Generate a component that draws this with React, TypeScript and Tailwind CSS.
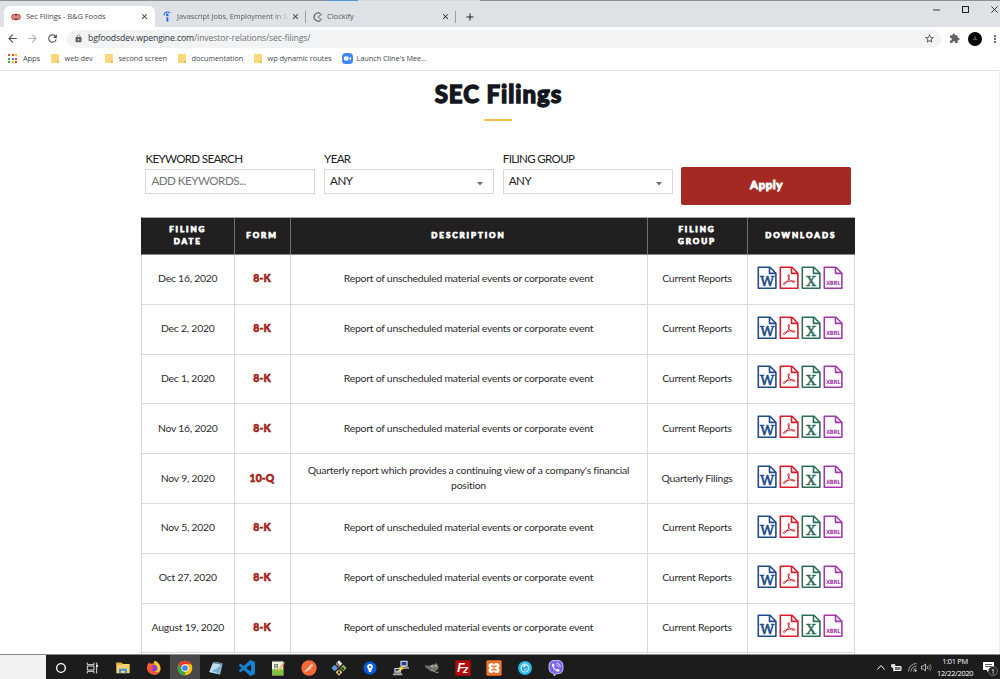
import type { ReactNode } from "react";
import { MdArrowBack, MdArrowForward, MdClose, MdExtension, MdLock, MdMoreVert, MdRefresh, MdStarBorder, MdAdd } from "react-icons/md";

const ui = "font-['Open_Sans','Noto_Sans',sans-serif]";

function TabSep() {
  return <div className="h-[12px] w-px shrink-0 bg-[#9a9da1]" />;
}

function TabStrip() {
  return (
    <div className="relative flex h-[27px] items-end border-t border-[#8c8f94] bg-[#dee1e6]">
      <div className="absolute -top-px left-[328px] h-px w-[30px] bg-[#4a9be0]" />
      <div className="absolute -top-px left-[358px] h-px w-[122px] bg-[#d5d8dc]" />
      <div className="ml-[4px] flex h-[21px] w-[151px] items-center rounded-t-[6px] bg-white pl-[7px]">
        <svg viewBox="0 0 20 14" className="h-[8px] w-[10px]">
          <ellipse cx="10" cy="7" rx="9.5" ry="6.5" fill="#b33a35" />
          <ellipse cx="6" cy="7" rx="2.6" ry="2.8" fill="none" stroke="#fff" strokeWidth="1.3" />
          <ellipse cx="14" cy="7" rx="2.6" ry="2.8" fill="none" stroke="#fff" strokeWidth="1.3" />
        </svg>
        <span className="ml-[5px] w-[114px] whitespace-nowrap text-[7.5px] tracking-[-0.05px] text-[#45494d]">Sec Filings - B&amp;G Foods</span>
        <MdClose className="size-[9px] text-[#222]" />
      </div>
      <div className="flex h-[21px] w-[150px] items-center pl-[8px]">
        <svg viewBox="0 0 10 14" className="h-[11px] w-[8px]" fill="none">
          <circle cx="5.4" cy="5" r="1.7" fill="#2164f3" />
          <path d="M5.5 8v5.5" stroke="#2164f3" strokeWidth="2.4" />
          <path d="M1 5.5C1.5 1.5 5 .2 9 2.2" stroke="#2164f3" strokeWidth="1.3" />
        </svg>
        <span className="ml-[4px] w-[112px] overflow-hidden whitespace-nowrap bg-linear-to-r from-[#505458] from-88% to-[#c4c7cb] bg-clip-text pl-[2px] text-[7.4px] tracking-[-0.03px] text-transparent">Javascript Jobs, Employment in S</span>
        <MdClose className="ml-[4px] size-[9px] shrink-0 text-[#222]" />
      </div>
      <div className="flex h-[21px] w-[151px] items-center">
        <TabSep />
        <svg viewBox="0 0 20 20" className="ml-[7px] size-[10px]" fill="none" stroke="#555" strokeWidth="2.2">
          <path d="M15 3A8.3 8.3 0 1 0 15 17" />
          <path d="M12 8.5 18 4M12 11.5l6 4.5" strokeWidth="1.8" />
          <circle cx="10.5" cy="10" r="1.3" fill="#555" stroke="none" />
        </svg>
        <span className="ml-[4px] w-[114px] text-[7.5px] text-[#505458]">Clockify</span>
        <MdClose className="size-[9px] text-[#222]" />
      </div>
      <div className="-ml-px flex h-[21px] items-center">
        <TabSep />
        <MdAdd className="ml-[8px] size-[12px] text-[#222]" />
      </div>
      <div className="mr-[1px] mb-[9px] ml-auto flex h-[17px] items-center gap-[22px]">
        <svg viewBox="0 0 8 8" className="size-[7px]"><path d="M0 4.5h8" stroke="#222" /></svg>
        <svg viewBox="0 0 8 8" className="size-[7px]"><path d="M.6.6h6.8v6.8H.6z" stroke="#222" strokeWidth="1.2" fill="none" /></svg>
        <svg viewBox="0 0 8 8" className="mr-[1px] size-[7px]"><path d="m.4.4 7.2 7.2M7.6.4.4 7.6" stroke="#222" /></svg>
      </div>
    </div>
  );
}

function Toolbar() {
  return (
    <div className="flex h-[23px] items-center bg-white pl-[6px]">
      <MdArrowBack className="size-[13px] shrink-0 text-[#4c4f52]" />
      <MdArrowForward className="ml-[7px] size-[13px] shrink-0 text-[#b0b2b5]" />
      <MdRefresh className="ml-[7px] size-[13px] shrink-0 text-[#4c4f52]" />
      <div className="ml-[8px] flex h-[18px] w-[874px] shrink-0 items-center rounded-full bg-[#f1f3f4] pr-[6px] pl-[7px]">
        <MdLock className="size-[9px] text-[#5f6368]" />
        <span className="ml-[5px] whitespace-nowrap text-[8.7px] tracking-[-0.12px] text-[#303438]">bgfoodsdev.wpengine.com<span className="text-[#6e7276]">/investor-relations/sec-filings/</span></span>
        <MdStarBorder className="ml-auto size-[11px] text-[#4c4f52]" />
      </div>
      <MdExtension className="ml-[8px] size-[11px] shrink-0 text-[#5f6368]" />
      <div className="ml-[8px] flex size-[14px] shrink-0 items-center justify-center rounded-full bg-black text-[6px] text-white">.i.</div>
      <MdMoreVert className="ml-[7px] size-[12px] shrink-0 text-[#4c4f52]" />
    </div>
  );
}

function Folder({ label, className }: { label: string; className: string }) {
  return (
    <div className={`flex items-center ${className}`}>
      <svg viewBox="0 0 8 9" className="h-[9px] w-[8px] shrink-0"><path d="M0 0h8v7.5L7 9H0z" fill="#fcd77c" /><path d="M6 7h2v1.5L7 9H6z" fill="#e9b949" /></svg>
      <span className="ml-[6px] whitespace-nowrap">{label}</span>
    </div>
  );
}

const appDots = ["#ea4335", "#ea4335", "#fbbc05", "#34a853", "#4285f4", "#ea4335", "#34a853", "#fbbc05", "#ea4335"];

function Bookmarks() {
  return (
    <div className="flex h-[21px] items-center border-b border-[#dfe3e3] bg-white pb-[3px] text-[7.4px] tracking-[-0.08px] text-[#45494d]">
      <div className="ml-[8px] grid grid-cols-3 gap-[1.5px]">
        {appDots.map((c, i) => <div key={i} className="size-[2px]" style={{ background: c }} />)}
      </div>
      <span className="ml-[6px] w-[27.5px]">Apps</span>
      <Folder label="web dev" className="w-[54px]" />
      <Folder label="second screen" className="w-[73px]" />
      <Folder label="documentation" className="w-[76px]" />
      <Folder label="wp dynamic routes" className="w-[88px]" />
      <svg viewBox="0 0 20 20" className="size-[11px]"><rect width="20" height="20" rx="7" fill="#3f86f5" /><rect x="3.5" y="6.5" width="8.5" height="7" rx="1.5" fill="#fff" /><path d="m13 9.5 3.5-2.5v6L13 10.500z" fill="#fff" /></svg>
      <span className="ml-[4px] whitespace-nowrap">Launch Cline's Mee...</span>
    </div>
  );
}

function Field({ label, value, select }: { label: string; value: string; select?: boolean }) {
  return (
    <div className="w-[170px]">
      <div className="h-[17px] text-[11.6px] leading-[14px] tracking-[-0.68px] whitespace-nowrap text-[#222]">{label}</div>
      <div className={`flex h-[25px] items-center justify-between border border-[#d8d8d8] pr-[9px] pb-[1px] pl-[5px] text-[11.6px] tracking-[-0.5px] ${select ? "text-[#222]" : "text-[#757575]"}`}>
        <span>{value}</span>
        {select && <svg viewBox="0 0 6 4" className="mt-[6px] mr-[1px] h-[4px] w-[6px]"><path d="M0 0h6L3 3.500z" fill="#6f6f6f" /></svg>}
      </div>
    </div>
  );
}

function FileIcon({ color, children }: { color: string; children: ReactNode }) {
  return (
    <svg viewBox="0 0 20 24" className="h-[24px] w-[20px]" fill="none" stroke={color} strokeWidth="1.6" strokeLinejoin="round">
      <path d="M1.300 1.300H13L18.900 7.200V22.200H1.300z" />
      <path d="M12.500 1.300v6.100h6.300" />
      {children}
    </svg>
  );
}

function Downloads() {
  return (
    <div className="flex gap-[2px] pr-[1px] pb-[2px]">
      <FileIcon color="#204b8c">
        <text x="10" y="19.600" textAnchor="middle" fontSize="13.500" textLength="14" lengthAdjust="spacingAndGlyphs" fill="#204b8c" stroke="#204b8c" strokeWidth=".6" className="font-['DejaVu_Serif',serif]">W</text>
      </FileIcon>
      <FileIcon color="#dd1c2c">
        <path d="M9.700 8.500c1.200 0 .4 3.500-.9 6.100-1.100 2.200-3.300 4.200-4.200 3.700-1-.8 1.700-2.300 4.300-2.900 3.300-.8 6.900-.8 7 .3 0 1.200-3.200.2-5.100-1.800-1.800-2-2.200-5.300-1.100-5.400z" strokeWidth="1" />
      </FileIcon>
      <FileIcon color="#2c6e59">
        <text x="10" y="19.600" textAnchor="middle" fontSize="13.500" textLength="9.500" lengthAdjust="spacingAndGlyphs" fill="#2c6e59" stroke="#2c6e59" strokeWidth=".5" className="font-['DejaVu_Serif',serif]">X</text>
      </FileIcon>
      <FileIcon color="#a239ac">
        <text x="10.200" y="19" textAnchor="middle" fontSize="5.800" textLength="14" lengthAdjust="spacingAndGlyphs" fill="#a239ac" stroke="none" className="font-['DejaVu_Sans',sans-serif] font-bold">XBRL</text>
      </FileIcon>
    </div>
  );
}

const report = "Report of unscheduled material events or corporate event";
const rows = [
  ["Dec 16, 2020", "8-K", report, "Current Reports"],
  ["Dec 2, 2020", "8-K", report, "Current Reports"],
  ["Dec 1, 2020", "8-K", report, "Current Reports"],
  ["Nov 16, 2020", "8-K", report, "Current Reports"],
  ["Nov 9, 2020", "10-Q", "Quarterly report which provides a continuing view of a company's financial position", "Quarterly Filings"],
  ["Nov 5, 2020", "8-K", report, "Current Reports"],
  ["Oct 27, 2020", "8-K", report, "Current Reports"],
  ["August 19, 2020", "8-K", report, "Current Reports"],
];

const cols = "grid grid-cols-[92.500px_56px_357px_100px_107.500px]";

function Filings() {
  return (
    <div className="mt-[12px] w-[714px]">
      <div className={`${cols} h-[38px] border-t border-b border-l border-t-[#aaa] border-b-[#8a8a8a] border-l-[#221f20] bg-[#221f20] text-center text-[8px] leading-[12.5px] font-black tracking-[1.95px] text-white [-webkit-text-stroke:0.75px_white]`}>
        {["FILING DATE", "FORM", "DESCRIPTION", "FILING GROUP", "DOWNLOADS"].map((h, i) => (
          <div key={h} className={`flex items-center justify-center pb-[2px] ${i < 4 ? "border-r border-[#707070]" : "pr-[1px]"} ${i === 0 || i === 3 ? "px-[21px]" : ""}`}>{h}</div>
        ))}
      </div>
      {rows.map((r) => (
        <div key={r[0]} className={`${cols} h-[49.8px] border-b border-l border-[#dadada] text-center text-[10.4px] leading-[15px] tracking-[-0.230px] text-[#2b2b2b] *:flex *:items-center *:justify-center *:border-r *:border-[#dadada] *:pb-[1px]`}>
          <div>{r[0]}</div>
          <div className="tracking-[0.1px] font-black text-[#a41e1a] [-webkit-text-stroke:0.55px_#a41e1a]">{r[1]}</div>
          <div className="px-[10px]">{r[2]}</div>
          <div>{r[3]}</div>
          <div><Downloads /></div>
        </div>
      ))}
      <div className={`${cols} h-[10px] border-l border-[#dadada] *:border-r *:border-[#dadada]`}><div /><div /><div /><div /><div /></div>
    </div>
  );
}

function Page() {
  return (
    <main className="h-[583px] overflow-hidden border-r border-[#eee] bg-white font-['Lato',sans-serif]">
      <h1 className="h-[48px] pt-[8px] pr-[2px] text-center text-[24px] leading-[30px] font-black tracking-[0.950px] text-[#14171d] [-webkit-text-stroke:1.300px_#14171d]">SEC Filings</h1>
      <div className="ml-[484px] h-[2px] w-[28px] bg-[#fcbc52]" />
      <div className="mt-[31px] ml-[145.400px] flex gap-[8.700px]">
        <Field label="KEYWORD SEARCH" value="ADD KEYWORDS..." />
        <Field label="YEAR" value="ANY" select />
        <Field label="FILING GROUP" value="ANY" select />
        <button className="mt-[15px] h-[38px] w-[170px] rounded-[2px] bg-[#a52923] pb-[2px] text-[11.500px] font-black tracking-[0.500px] text-white [-webkit-text-stroke:0.8px_white]">Apply</button>
      </div>
      <div className="pl-[141px]"><Filings /></div>
    </main>
  );
}

function Ico({ children }: { children: ReactNode }) {
  return <svg viewBox="0 0 24 24" className="size-[16px]">{children}</svg>;
}

const taskIcons: ReactNode[] = [
  <Ico><circle cx="12" cy="12" r="6.500" fill="none" stroke="#fff" strokeWidth="2" /></Ico>,
  <Ico><path d="M5 4v3h10V4M5 20v-3h10v3M5 9h10v6H5zM19 4v3M19 10v10" fill="none" stroke="#ddd" strokeWidth="1.500" /><path d="M18 7h3v3h-3z" fill="#fff" /></Ico>,
  <Ico><path d="M2 4h8l2 2h10v14H2z" fill="#f9d26b" /><path d="M2 4h8l1 3H2z" fill="#e8a93c" /><path d="M6 20v-7h12v7h-3v-4H9v4z" fill="#3b8ee0" /></Ico>,
  <Ico>
    <path d="M12 2c4 1 10 5 10 11 0 6-5 9-10 9S1.500 18 1.500 12C1.500 8 3 6 5 3l1 3c2-1 4-1 5 0z" fill="#ff6b2c" />
    <path d="M13 1c6 2 10 8 8 14-2 5-8 5-8 1 4-1 4-5 1-8-2-2-2-5-1-7z" fill="#ffcb35" />
    <circle cx="12" cy="12.500" r="5" fill="#8041d8" />
    <path d="M2 12c0 8 13 12 18 5-5 3-10 1-12-4 2 1 4-1 4-2-3 0-5-3-7-4-2 0-3 3-3 5z" fill="#f8503d" />
  </Ico>,
  <Ico>
    <circle cx="12" cy="12" r="11" fill="#fbc116" />
    <path d="M12 1A11 11 0 0 1 21.500 6.500H12L7 15 2.500 6.500A11 11 0 0 1 12 1z" fill="#e33b2e" />
    <path d="M2.500 6.500 7.300 14.700 12 17.500l-3 5A11 11 0 0 1 2.500 6.500z" fill="#2da94f" />
    <path d="m12 17.500-1.500 5.400" stroke="#2da94f" strokeWidth="2" />
    <circle cx="12" cy="12" r="5.500" fill="#fff" /><circle cx="12" cy="12" r="4.300" fill="#4285f4" />
  </Ico>,
  <Ico><path d="m8 3 14 2-4 17-16-4z" fill="#8bbfdd" /><path d="m8 3 11 1.600-6 15.600L2 18z" fill="#bde0ef" /><path d="M8 3 22 5l-.5 2L7.300 5z" fill="#5d7e91" /><path d="m5 17 10 2 4-10z" fill="#538eb3" opacity=".6" /></Ico>,
  <Ico><path d="M23.150 2.587 18.210.210a1.494 1.494 0 0 0-1.705.290l-9.460 8.630-4.120-3.128a1 1 0 0 0-1.276.057L.327 7.261A1 1 0 0 0 .326 8.740L3.899 12 .326 15.260a1 1 0 0 0 .001 1.479L1.650 17.940a1 1 0 0 0 1.276.057l4.120-3.128 9.460 8.630a1.492 1.492 0 0 0 1.704.290l4.942-2.377A1.500 1.500 0 0 0 24 20.060V3.939a1.500 1.500 0 0 0-.850-1.352zM18.004 17.448 10.826 12l7.178-5.448z" fill="#1482ce" /></Ico>,
  <Ico><path d="M3 2h17v21H3z" fill="#eef3e3" /><path d="M3 14h17v9H3z" fill="#7cc142" /><path d="M7 6v7M7 7h5M11 6v7M7 10h4" stroke="#666" strokeWidth="1.300" /><path d="m12 15 8-12 2 1.500-7 11-3 2z" fill="#f0b33c" /><path d="M3 2h15" stroke="#777" strokeWidth="2" strokeDasharray="1.500 1" /></Ico>,
  <Ico><circle cx="12" cy="12" r="11.500" fill="#fb6a36" /><path d="m6 17 6-7 4 2-6 4zM12 10l4-4 2.500 2-4 3z" fill="#fff" opacity=".8" /><path d="m5 18 5-3" stroke="#fff" /></Ico>,
  <Ico>
    <path d="m12 .500 5 5-5 5-5-5z" fill="#eee" /><path d="m5.500 7 5 5-5 5-5-5z" fill="#5b9bd9" /><path d="m18.500 7 5 5-5 5-5-5z" fill="#83c64d" /><path d="m12 13.500 5 5-5 5-5-5z" fill="#f3ca72" />
    <path d="M8 3.500 12 8v11M12 9l6 4" stroke="#333" strokeWidth="1.600" fill="none" /><circle cx="12" cy="9" r="1.800" fill="#d85442" /><circle cx="12" cy="19" r="1.800" fill="#333" /><circle cx="18" cy="13" r="1.800" fill="#333" />
  </Ico>,
  <Ico><circle cx="12" cy="12" r="9.800" fill="#0a5be8" /><path d="M12 6a4.300 4.300 0 0 1 4.300 4.300c0 2-2 3.700-2.800 7.700h-3c-.8-4-2.800-5.700-2.800-7.700A4.300 4.300 0 0 1 12 6z" fill="#fff" /><circle cx="12" cy="10.500" r="1.600" fill="#0a5be8" /></Ico>,
  <Ico>
    <path d="M11 1h11v9H11zM2 12h10v7H2z" fill="#c6c9d0" /><path d="M13 3h7v5h-7zM4 13.500h6V17H4z" fill="#1d38a8" /><path d="M12 11h12v2H12zM0 20h14v3H0z" fill="#a6a8ae" /><path d="m18 9-8 3 4 1-7 4" stroke="#f6df31" strokeWidth="2" fill="none" />
  </Ico>,
  <Ico><path d="M1 8c4 1 7 1 10 0 3-2 6-1 8-4l3 7c-1 4-4 6-8 6-4 1-7-2-8-4-3 0-4-2-5-5z" fill="#77716a" /><circle cx="13" cy="9" r="1.900" fill="#eee" /><circle cx="18" cy="9" r="1.600" fill="#eee" /><circle cx="13.500" cy="9" r="1" fill="#111" /><circle cx="18" cy="9" r=".9" fill="#111" /><path d="m11 15 8 4 3-1" stroke="#a4a09a" strokeWidth="1.500" fill="none" /></Ico>,
  <Ico><path d="M.500.500h23v23H.500z" fill="#b60a0a" /><text x="3.500" y="18" fontSize="18" fill="#fff" className="font-['Liberation_Sans',sans-serif] font-bold italic">F</text><text x="12" y="20" fontSize="16" fill="#fff" className="font-['Liberation_Sans',sans-serif] font-bold italic">z</text></Ico>,
  <Ico><rect x=".500" y=".500" width="23" height="23" rx="2" fill="#f3702a" /><path d="M8.500 4.500h1.500l2 2.500 2-2.500h2.500a4 4 0 0 1 3 6.500l-1 1 1 1a4 4 0 0 1-3 6.500H14L12 17l-2 2.500H7.500a4 4 0 0 1-3-6.500l1-1-1-1a4 4 0 0 1 3-6.500z" fill="#fff" /><path d="M8 9h2l2 1.500L14 9h2M8 15h2l2-1.500 2 1.500h2" stroke="#f3702a" strokeWidth="2.200" fill="none" /></Ico>,
  <Ico><circle cx="12" cy="12" r="10.500" fill="#27b5e3" /><circle cx="12" cy="12" r="7" fill="#a8e5f5" /><path d="M8 9h7l2 3-3 5H9l-2-4z" fill="#31a6ce" /><path d="M9 10h3M14 13l-3 2" stroke="#fff" strokeWidth="1.500" /></Ico>,
  <Ico>
    <path d="M12 .500c8 0 10.500 2.500 10.500 10.500S20 20.500 13 20.500L9 24v-4C3.500 19.500 1.500 17 1.500 11 1.500 3 4 .500 12 .500z" fill="#7b64ee" stroke="#d8d0fa" strokeWidth="1.400" />
    <path d="M7 5.500c1-.8 2 .5 2.800 2 .5 1.200-1.300 1.500-1 2.500.8 2.200 2.200 3.700 4.200 4.400 1 .3 1.400-1.500 2.500-1 1.500.8 2.700 1.800 2 2.800-1 1.500-2 1.800-3.500 1C10.500 15.500 7.500 12.500 6 8.500 5.600 7.200 6 6.300 7 5.500z" fill="#fff" />
    <path d="M12.500 4.500c3.500.3 5.500 2.300 5.700 6M13 7.500c1.600.2 2.300 1 2.500 2.700" stroke="#fff" strokeWidth="1.200" fill="none" />
  </Ico>,
];

function Taskbar() {
  return (
    <div className="flex h-[25px] border-t border-[#8a8a8a] bg-[#1c1c1c]">
      <div className="w-[46px] shrink-0 bg-[#f2f2f2]" />
      {taskIcons.map((icon, i) => (
        <div key={i} className={`flex w-[30.900px] shrink-0 items-center justify-center pt-[1px] ${i === 4 ? "bg-[#484848]" : ""}`}>{icon}</div>
      ))}
      <div className="mr-[2px] ml-auto flex items-center pt-[1px]">
        <svg viewBox="0 0 8 5" className="h-[5px] w-[8px]" fill="none" stroke="#fff" strokeWidth="1"><path d="m.5 4.500 3.500-4 3.500 4" /></svg>
        <svg viewBox="0 0 11 8" className="ml-[6px] h-[8px] w-[11px]"><path d="M3.500 2.500H10v4H3.500z" fill="#777" stroke="#fff" /><path d="M.5.5h3.500v2.500L2.500 4 .5 3zM2.500 4v3h1" fill="#ddd" stroke="#fff" strokeWidth=".6" /></svg>
        <svg viewBox="0 0 9 9" className="ml-[6px] size-[9px]" fill="none" stroke="#ccc" strokeWidth=".8"><path d="M.5 8.500A8 8 0 0 1 8.500.500M3 8.500A5.500 5.500 0 0 1 8.500 3M5.500 8.500a3 3 0 0 1 3-3" /><circle cx="7.700" cy="7.700" r=".7" fill="#fff" /></svg>
        <svg viewBox="0 0 11 9" className="ml-[4px] h-[9px] w-[11px]" fill="none" stroke="#ddd" strokeWidth=".8"><path d="M.5 3h1.600L4.500 1v7L2.100 6H.500zM6 3q1 1.500 0 3" /><path d="M7.500 2q2 2.500 0 5M9 1q2.500 3.500 0 7" stroke="#888" /></svg>
        <div className="ml-[5px] w-[36px] text-center text-[7.400px] leading-[11.500px] tracking-[-0.300px] whitespace-nowrap text-white"><div>1:01 PM</div><div>12/22/2020</div></div>
        <svg viewBox="0 0 16 16" className="mt-[1px] ml-[9px] size-[16px]"><path d="M1 2h11v8H7l-2 2v-2H1z" fill="#fff" /><path d="M3 4.500h7M3 6.500h7" stroke="#333" strokeWidth=".8" /><circle cx="11" cy="11" r="4.500" fill="#222" stroke="#888" strokeWidth=".8" /><text x="11" y="13.500" textAnchor="middle" fontSize="7" fill="#fff">1</text></svg>
      </div>
    </div>
  );
}

export default function App() {
  return (
    <div className={`flex h-[679px] w-[1000px] flex-col overflow-hidden ${ui}`}>
      <TabStrip />
      <Toolbar />
      <Bookmarks />
      <Page />
      <Taskbar />
    </div>
  );
}
